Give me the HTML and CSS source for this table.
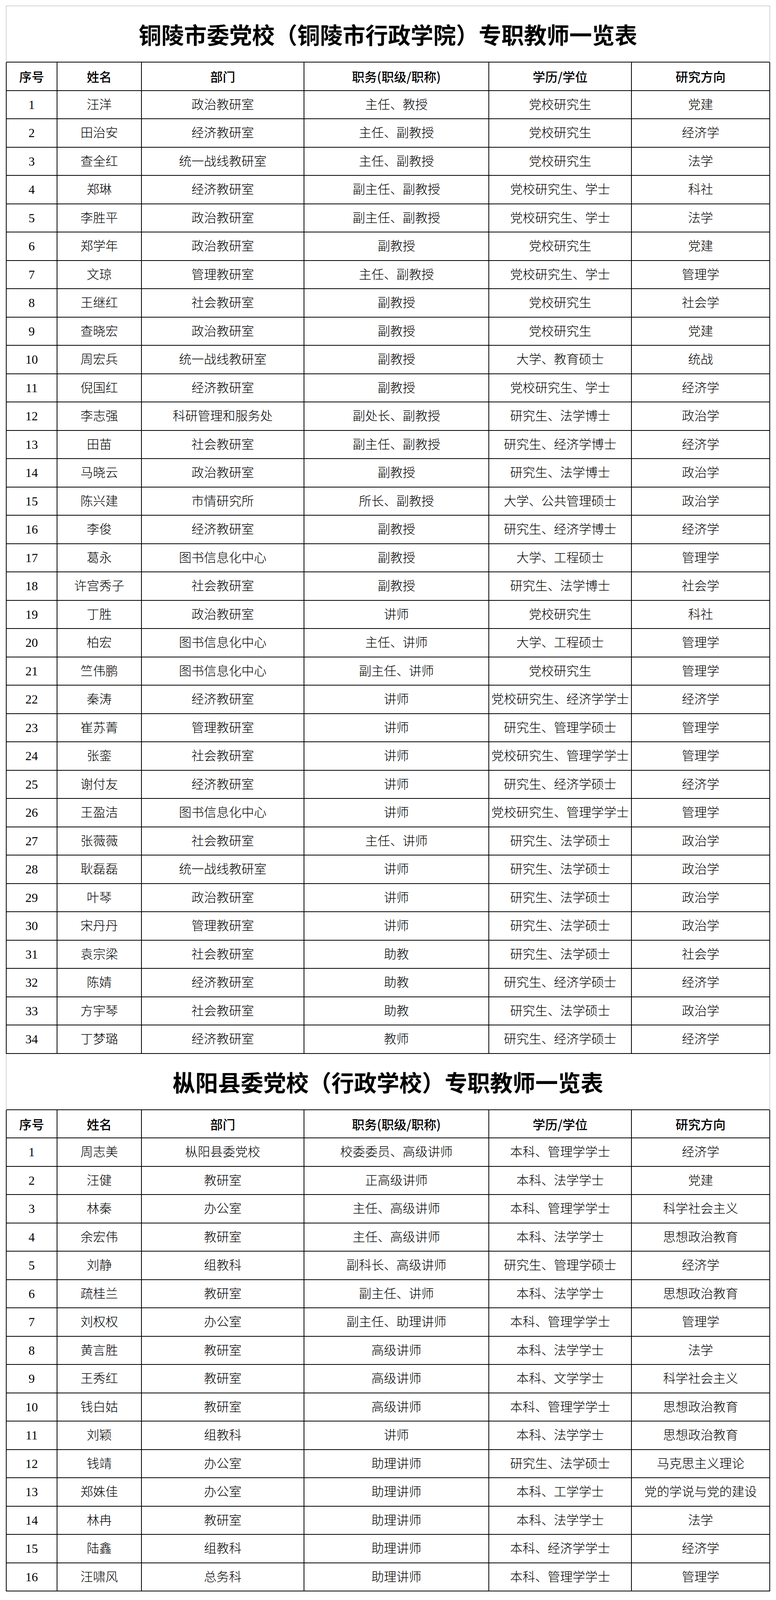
FILE: index.html
```html
<!DOCTYPE html>
<html lang="zh-CN">
<head>
<meta charset="utf-8">
<title>专职教师一览表</title>
<link rel="stylesheet" href="styles.css">
</head>
<body>
<table class="roster">
  <colgroup>
    <col class="c-no"><col class="c-name"><col class="c-dept"><col class="c-post"><col class="c-edu"><col class="c-field">
  </colgroup>
  <tbody>
    <tr class="title-row first"><td class="title-cell" colspan="6">铜陵市委党校（铜陵市行政学院）专职教师一览表</td></tr>
    <tr class="head-row"><th>序号</th><th>姓名</th><th>部门</th><th>职务(职级/职称)</th><th>学历/学位</th><th>研究方向</th></tr>
    <tr><td>1</td><td>汪洋</td><td>政治教研室</td><td>主任、教授</td><td>党校研究生</td><td>党建</td></tr>
    <tr><td>2</td><td>田治安</td><td>经济教研室</td><td>主任、副教授</td><td>党校研究生</td><td>经济学</td></tr>
    <tr><td>3</td><td>查全红</td><td>统一战线教研室</td><td>主任、副教授</td><td>党校研究生</td><td>法学</td></tr>
    <tr><td>4</td><td>郑琳</td><td>经济教研室</td><td>副主任、副教授</td><td>党校研究生、学士</td><td>科社</td></tr>
    <tr><td>5</td><td>李胜平</td><td>政治教研室</td><td>副主任、副教授</td><td>党校研究生、学士</td><td>法学</td></tr>
    <tr><td>6</td><td>郑学年</td><td>政治教研室</td><td>副教授</td><td>党校研究生</td><td>党建</td></tr>
    <tr><td>7</td><td>文琼</td><td>管理教研室</td><td>主任、副教授</td><td>党校研究生、学士</td><td>管理学</td></tr>
    <tr><td>8</td><td>王继红</td><td>社会教研室</td><td>副教授</td><td>党校研究生</td><td>社会学</td></tr>
    <tr><td>9</td><td>查晓宏</td><td>政治教研室</td><td>副教授</td><td>党校研究生</td><td>党建</td></tr>
    <tr><td>10</td><td>周宏兵</td><td>统一战线教研室</td><td>副教授</td><td>大学、教育硕士</td><td>统战</td></tr>
    <tr><td>11</td><td>倪国红</td><td>经济教研室</td><td>副教授</td><td>党校研究生、学士</td><td>经济学</td></tr>
    <tr><td>12</td><td>李志强</td><td>科研管理和服务处</td><td>副处长、副教授</td><td>研究生、法学博士</td><td>政治学</td></tr>
    <tr><td>13</td><td>田苗</td><td>社会教研室</td><td>副主任、副教授</td><td>研究生、经济学博士</td><td>经济学</td></tr>
    <tr><td>14</td><td>马晓云</td><td>政治教研室</td><td>副教授</td><td>研究生、法学博士</td><td>政治学</td></tr>
    <tr><td>15</td><td>陈兴建</td><td>市情研究所</td><td>所长、副教授</td><td>大学、公共管理硕士</td><td>政治学</td></tr>
    <tr><td>16</td><td>李俊</td><td>经济教研室</td><td>副教授</td><td>研究生、经济学博士</td><td>经济学</td></tr>
    <tr><td>17</td><td>葛永</td><td>图书信息化中心</td><td>副教授</td><td>大学、工程硕士</td><td>管理学</td></tr>
    <tr><td>18</td><td>许宫秀子</td><td>社会教研室</td><td>副教授</td><td>研究生、法学博士</td><td>社会学</td></tr>
    <tr><td>19</td><td>丁胜</td><td>政治教研室</td><td>讲师</td><td>党校研究生</td><td>科社</td></tr>
    <tr><td>20</td><td>柏宏</td><td>图书信息化中心</td><td>主任、讲师</td><td>大学、工程硕士</td><td>管理学</td></tr>
    <tr><td>21</td><td>竺伟鹏</td><td>图书信息化中心</td><td>副主任、讲师</td><td>党校研究生</td><td>管理学</td></tr>
    <tr><td>22</td><td>秦涛</td><td>经济教研室</td><td>讲师</td><td>党校研究生、经济学学士</td><td>经济学</td></tr>
    <tr><td>23</td><td>崔苏菁</td><td>管理教研室</td><td>讲师</td><td>研究生、管理学硕士</td><td>管理学</td></tr>
    <tr><td>24</td><td>张銮</td><td>社会教研室</td><td>讲师</td><td>党校研究生、管理学学士</td><td>管理学</td></tr>
    <tr><td>25</td><td>谢付友</td><td>经济教研室</td><td>讲师</td><td>研究生、经济学硕士</td><td>经济学</td></tr>
    <tr><td>26</td><td>王盈洁</td><td>图书信息化中心</td><td>讲师</td><td>党校研究生、管理学学士</td><td>管理学</td></tr>
    <tr><td>27</td><td>张薇薇</td><td>社会教研室</td><td>主任、讲师</td><td>研究生、法学硕士</td><td>政治学</td></tr>
    <tr><td>28</td><td>耿磊磊</td><td>统一战线教研室</td><td>讲师</td><td>研究生、法学硕士</td><td>政治学</td></tr>
    <tr><td>29</td><td>叶琴</td><td>政治教研室</td><td>讲师</td><td>研究生、法学硕士</td><td>政治学</td></tr>
    <tr><td>30</td><td>宋丹丹</td><td>管理教研室</td><td>讲师</td><td>研究生、法学硕士</td><td>政治学</td></tr>
    <tr><td>31</td><td>袁宗梁</td><td>社会教研室</td><td>助教</td><td>研究生、法学硕士</td><td>社会学</td></tr>
    <tr><td>32</td><td>陈婧</td><td>经济教研室</td><td>助教</td><td>研究生、经济学硕士</td><td>经济学</td></tr>
    <tr><td>33</td><td>方宇琴</td><td>社会教研室</td><td>助教</td><td>研究生、法学硕士</td><td>政治学</td></tr>
    <tr><td>34</td><td>丁梦璐</td><td>经济教研室</td><td>教师</td><td>研究生、经济学硕士</td><td>经济学</td></tr>
    <tr class="title-row"><td class="title-cell" colspan="6">枞阳县委党校（行政学校）专职教师一览表</td></tr>
    <tr class="head-row"><th>序号</th><th>姓名</th><th>部门</th><th>职务(职级/职称)</th><th>学历/学位</th><th>研究方向</th></tr>
    <tr><td>1</td><td>周志美</td><td>枞阳县委党校</td><td>校委委员、高级讲师</td><td>本科、管理学学士</td><td>经济学</td></tr>
    <tr><td>2</td><td>汪健</td><td>教研室</td><td>正高级讲师</td><td>本科、法学学士</td><td>党建</td></tr>
    <tr><td>3</td><td>林秦</td><td>办公室</td><td>主任、高级讲师</td><td>本科、管理学学士</td><td>科学社会主义</td></tr>
    <tr><td>4</td><td>余宏伟</td><td>教研室</td><td>主任、高级讲师</td><td>本科、法学学士</td><td>思想政治教育</td></tr>
    <tr><td>5</td><td>刘静</td><td>组教科</td><td>副科长、高级讲师</td><td>研究生、管理学硕士</td><td>经济学</td></tr>
    <tr><td>6</td><td>疏桂兰</td><td>教研室</td><td>副主任、讲师</td><td>本科、法学学士</td><td>思想政治教育</td></tr>
    <tr><td>7</td><td>刘权权</td><td>办公室</td><td>副主任、助理讲师</td><td>本科、管理学学士</td><td>管理学</td></tr>
    <tr><td>8</td><td>黄言胜</td><td>教研室</td><td>高级讲师</td><td>本科、法学学士</td><td>法学</td></tr>
    <tr><td>9</td><td>王秀红</td><td>教研室</td><td>高级讲师</td><td>本科、文学学士</td><td>科学社会主义</td></tr>
    <tr><td>10</td><td>钱白姑</td><td>教研室</td><td>高级讲师</td><td>本科、管理学学士</td><td>思想政治教育</td></tr>
    <tr><td>11</td><td>刘颖</td><td>组教科</td><td>讲师</td><td>本科、法学学士</td><td>思想政治教育</td></tr>
    <tr><td>12</td><td>钱靖</td><td>办公室</td><td>助理讲师</td><td>研究生、法学硕士</td><td>马克思主义理论</td></tr>
    <tr><td>13</td><td>郑姝佳</td><td>办公室</td><td>助理讲师</td><td>本科、工学学士</td><td>党的学说与党的建设</td></tr>
    <tr><td>14</td><td>林冉</td><td>教研室</td><td>助理讲师</td><td>本科、法学学士</td><td>法学</td></tr>
    <tr><td>15</td><td>陆鑫</td><td>组教科</td><td>助理讲师</td><td>本科、经济学学士</td><td>经济学</td></tr>
    <tr><td>16</td><td>汪啸风</td><td>总务科</td><td>助理讲师</td><td>本科、管理学学士</td><td>管理学</td></tr>
  </tbody>
</table>
</body>
</html>
```
FILE: styles.css
```css
html, body {
  margin: 0;
  background: #ffffff;
}

body {
  padding: 14px 15px 0 15px;
  color: #000000;
  font-family: "Liberation Serif", "Noto Sans CJK SC", serif;
}

.roster {
  border-collapse: separate;
  border-spacing: 0;
  table-layout: fixed;
  width: 1956px;
}

.c-no { width: 132px; }
.c-name { width: 216px; }
.c-dept { width: 416px; }
.c-post { width: 473px; }
.c-edu { width: 365px; }
.c-field { width: 354px; }

.roster tr {
  height: 72.5px;
}

.roster td,
.roster th {
  padding: 0;
  border-right: 2px solid #000000;
  border-bottom: 2px solid #000000;
  text-align: center;
  vertical-align: middle;
  font-size: 32px;
  font-weight: 300;
  line-height: 40px;
  white-space: nowrap;
}

.roster tr > :first-child {
  border-left: 2px solid #000000;
}

.roster th {
  font-family: "Noto Sans CJK SC", sans-serif;
  font-weight: 500;
}

.roster .title-row {
  height: 144px;
}

.roster .title-row.first {
  height: 146px;
}

.roster .title-row .title-cell {
  border-left: 2px solid #d4d4d4;
  border-right: 2px solid #d4d4d4;
  border-bottom: 2px solid #000000;
  font-family: "Noto Sans CJK SC", sans-serif;
  font-size: 58px;
  font-weight: 700;
  line-height: 70px;
}

.roster .title-row.first .title-cell {
  border-top: 2px solid #d4d4d4;
}
```
